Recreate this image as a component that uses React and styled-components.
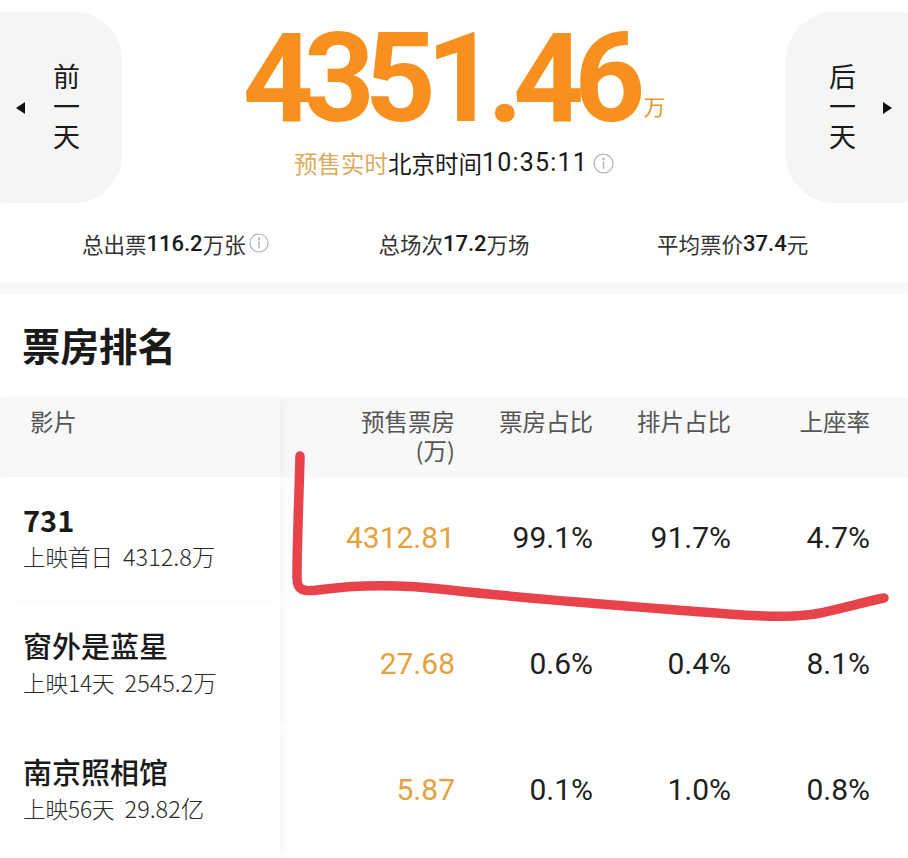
import React from 'react';
import styled, { createGlobalStyle } from 'styled-components';

const GlobalStyle = createGlobalStyle`
  html, body {
    margin: 0;
    padding: 0;
    background: #fff;
  }
  body {
    font-family: Roboto, "Noto Sans CJK SC", sans-serif;
    color: #222;
  }
`;

const CJK = `"Noto Sans CJK SC", "Noto Sans", sans-serif`;
const NUM = `Roboto, "Noto Sans CJK SC", sans-serif`;

const Page = styled.div`
  position: relative;
  width: 908px;
  height: 858px;
  overflow: hidden;
  background: #fff;
`;

const Top = styled.div`
  display: flex;
  align-items: flex-start;
`;

const NavBox = styled.div`
  display: flex;
  align-items: center;
  justify-content: ${({ side }) => (side === 'left' ? 'flex-start' : 'flex-end')};
  gap: 26px;
  flex: 0 0 162px;
  height: 191px;
  margin-top: 12px;
  ${({ side }) => (side === 'left'
    ? 'margin-left: -40px; padding-left: 56px;'
    : 'margin-right: -40px; padding-right: 56px;')}
  box-sizing: border-box;
  border-radius: 48px;
  background: #f5f5f5;
`;

const VerticalLabel = styled.div`
  writing-mode: vertical-rl;
  font-family: ${CJK};
  font-size: 27px;
  line-height: 30px;
  letter-spacing: 3px;
  color: #1a1a1a;
`;

const Arrow = ({ dir }) => (
  <svg width="9" height="12" viewBox="0 0 9 12">
    {dir === 'left'
      ? <path d="M9 0 L0 6 L9 12 Z" fill="#111" />
      : <path d="M0 0 L9 6 L0 12 Z" fill="#111" />}
  </svg>
);

const Center = styled.div`
  flex: 1;
  display: flex;
  flex-direction: column;
  align-items: center;
  padding-top: 6px;
`;

const BigLine = styled.div`
  display: flex;
  align-items: flex-end;
`;

const BigNumber = styled.span`
  font-family: ${NUM};
  font-weight: 700;
  font-size: 124px;
  line-height: 145px;
  letter-spacing: -10px;
  color: #f7901e;
`;

const BigUnit = styled.span`
  font-family: ${CJK};
  font-size: 22px;
  line-height: 22px;
  padding-bottom: 35px;
  color: #e39a33;
  margin-left: 8px;
`;

const RealTime = styled.div`
  display: flex;
  align-items: center;
  font-family: ${CJK};
  font-size: 23.5px;
  line-height: 24px;
  color: #1a1a1a;
`;

const Gold = styled.span`
  color: #dcab5c;
`;

const Clock = styled.span`
  font-family: ${NUM};
  font-size: 25px;
  letter-spacing: 1.2px;
  margin-right: 2px;
`;

const InfoIcon = ({ size = 21 }) => (
  <svg width={size} height={size} viewBox="0 0 20 20" style={{ marginLeft: 3 }}>
    <circle cx="10" cy="10" r="9" fill="none" stroke="#b5b5b5" strokeWidth="1.2" />
    <circle cx="10" cy="5.8" r="1.2" fill="#b5b5b5" />
    <rect x="9.25" y="8.2" width="1.5" height="7" fill="#b5b5b5" />
  </svg>
);

const Stats = styled.div`
  display: grid;
  grid-template-columns: repeat(3, 1fr);
  height: 80px;
  padding: 0 36px;
  align-items: center;
`;

const Stat = styled.div`
  display: flex;
  align-items: center;
  justify-content: center;
  font-family: ${CJK};
  font-size: 21.5px;
  color: #333;
`;

const StatNum = styled.span`
  font-family: ${NUM};
  font-weight: 500;
  font-size: 22px;
  color: #1a1a1a;
`;

const Divider = styled.div`
  height: 11px;
  background: #f7f7f7;
`;

const SectionTitle = styled.h2`
  margin: 0;
  padding: 25px 22px 28px;
  font-family: ${CJK};
  font-size: 38.5px;
  line-height: 50px;
  font-weight: 700;
  color: #1a1a1a;
`;

const Row = styled.div`
  display: grid;
  grid-template-columns: 280px 175px 138px 138px 139px;
  padding-right: 38px;
  height: ${({ head }) => (head ? 80 : 126)}px;
  background: ${({ head }) => (head ? '#f8f8f8' : '#fff')};
`;

const FilmCell = styled.div`
  position: relative;
  z-index: 1;
  display: flex;
  flex-direction: column;
  justify-content: ${({ head }) => (head ? 'flex-start' : 'center')};
  padding: ${({ head }) => (head ? '10px 30px' : '0 23px 6px')};
  background: inherit;
  box-shadow: 5px 0 9px -3px rgba(0, 0, 0, 0.06);
`;

const HeadText = styled.div`
  font-family: ${CJK};
  font-size: 23.5px;
  line-height: 29px;
  color: #555;
`;

const HeadCell = styled.div`
  padding-top: 10px;
  text-align: right;
  font-family: ${CJK};
  font-size: 23.5px;
  line-height: 29px;
  color: #555;
`;

const FilmName = styled.div`
  font-family: ${CJK};
  font-size: 29px;
  line-height: 38px;
  font-weight: ${({ num }) => (num ? 700 : 500)};
  color: #1a1a1a;
`;

const FilmSub = styled.div`
  font-family: ${CJK};
  font-size: 22.5px;
  line-height: 36px;
  font-weight: 300;
  color: #2a2a2a;
`;

const SubNum = styled.span`
  margin-left: 10px;
  font-size: 23.5px;
`;

const ValueCell = styled.div`
  display: flex;
  align-items: center;
  justify-content: flex-end;
  padding-bottom: 6px;
  font-family: ${NUM};
  font-size: 30px;
  color: ${({ accent }) => (accent ? '#e8a03c' : '#1f1f1f')};
`;

const Annotation = styled.svg`
  position: absolute;
  left: 0;
  top: 0;
  pointer-events: none;
`;

const films = [
  { name: '731', num: true, sub: '上映首日', total: '4312.8万', box: '4312.81', share: '99.1%', sched: '91.7%', seat: '4.7%' },
  { name: '窗外是蓝星', sub: '上映14天', total: '2545.2万', box: '27.68', share: '0.6%', sched: '0.4%', seat: '8.1%' },
  { name: '南京照相馆', sub: '上映56天', total: '29.82亿', box: '5.87', share: '0.1%', sched: '1.0%', seat: '0.8%' },
];

export default function App() {
  return (
    <Page>
      <GlobalStyle />
      <Top>
        <NavBox side="left">
          <Arrow dir="left" />
          <VerticalLabel>前一天</VerticalLabel>
        </NavBox>
        <Center>
          <BigLine>
            <BigNumber>4351.46</BigNumber>
            <BigUnit>万</BigUnit>
          </BigLine>
          <RealTime>
            <Gold>预售实时</Gold>
            <span>北京时间</span>
            <Clock>10:35:11</Clock>
            <InfoIcon />
          </RealTime>
        </Center>
        <NavBox side="right">
          <VerticalLabel>后一天</VerticalLabel>
          <Arrow dir="right" />
        </NavBox>
      </Top>

      <Stats>
        <Stat>总出票<StatNum>116.2</StatNum>万张<InfoIcon size={20} /></Stat>
        <Stat>总场次<StatNum>17.2</StatNum>万场</Stat>
        <Stat>平均票价<StatNum>37.4</StatNum>元</Stat>
      </Stats>
      <Divider />

      <SectionTitle>票房排名</SectionTitle>

      <Row head>
        <FilmCell head>
          <HeadText>影片</HeadText>
        </FilmCell>
        <HeadCell>预售票房<br />(万)</HeadCell>
        <HeadCell>票房占比</HeadCell>
        <HeadCell>排片占比</HeadCell>
        <HeadCell>上座率</HeadCell>
      </Row>
      {films.map((f) => (
        <Row key={f.name}>
          <FilmCell>
            <FilmName num={f.num}>{f.name}</FilmName>
            <FilmSub>{f.sub}<SubNum>{f.total}</SubNum></FilmSub>
          </FilmCell>
          <ValueCell accent>{f.box}</ValueCell>
          <ValueCell>{f.share}</ValueCell>
          <ValueCell>{f.sched}</ValueCell>
          <ValueCell>{f.seat}</ValueCell>
        </Row>
      ))}

      <Annotation width="908" height="858" viewBox="0 0 908 858">
        <path
          d="M300 456 C299 500 297 540 297 578 C297 590 303 592 318 590 C360 584 400 584 450 590 C520 598 600 604 690 611 C740 615 780 619 815 614 C840 609 860 603 884 598"
          fill="none"
          stroke="#e8434a"
          strokeWidth="9.5"
          strokeLinecap="round"
          strokeLinejoin="round"
        />
      </Annotation>
    </Page>
  );
}
